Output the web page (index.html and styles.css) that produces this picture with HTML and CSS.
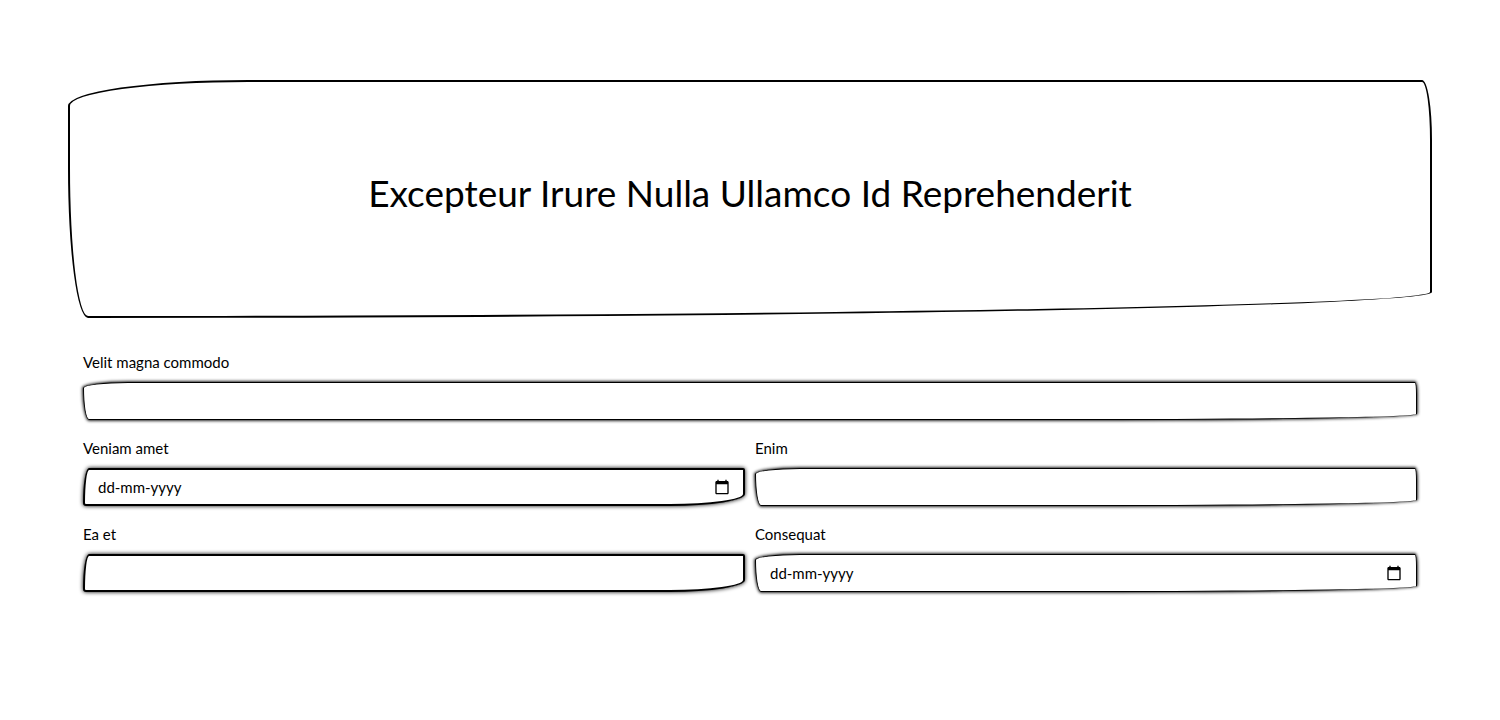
FILE: index.html
```html
<!DOCTYPE html>
<html lang="la">
<head>
<meta charset="utf-8">
<meta name="viewport" content="width=device-width, initial-scale=1">
<title>Excepteur Irure Nulla Ullamco Id Reprehenderit</title>
<link rel="stylesheet" href="styles.css">
</head>
<body>
<main class="page">
  <header class="banner">
    <h1 class="banner-title">Excepteur Irure Nulla Ullamco Id Reprehenderit</h1>
  </header>
  <form class="form">
    <div class="field field-wide">
      <label for="velit">Velit magna commodo</label>
      <input class="control" id="velit" type="text">
    </div>
    <div class="field">
      <label for="veniam">Veniam amet</label>
      <div class="control control-bold date">
        <input class="date-input" id="veniam" type="text" placeholder="dd-mm-yyyy">
        <button class="date-button" type="button" aria-label="Veniam amet">
          <svg viewBox="0 0 24 24" width="16" height="16"><path d="M20 3h-1V1h-2v2H7V1H5v2H4c-1.1 0-2 .9-2 2v16c0 1.100.9 2 2 2h16c1.100 0 2-.9 2-2V5c0-1.100-.9-2-2-2zm0 18H4V8h16v13z"/></svg>
        </button>
      </div>
    </div>
    <div class="field">
      <label for="enim">Enim</label>
      <input class="control" id="enim" type="text">
    </div>
    <div class="field">
      <label for="ea">Ea et</label>
      <input class="control control-bold" id="ea" type="text">
    </div>
    <div class="field">
      <label for="consequat">Consequat</label>
      <div class="control date">
        <input class="date-input" id="consequat" type="text" placeholder="dd-mm-yyyy">
        <button class="date-button" type="button" aria-label="Consequat">
          <svg viewBox="0 0 24 24" width="16" height="16"><path d="M20 3h-1V1h-2v2H7V1H5v2H4c-1.1 0-2 .9-2 2v16c0 1.100.9 2 2 2h16c1.100 0 2-.9 2-2V5c0-1.100-.9-2-2-2zm0 18H4V8h16v13z"/></svg>
        </button>
      </div>
    </div>
  </form>
</main>
</body>
</html>
```
FILE: styles.css
```css
* {
  box-sizing: border-box;
}

body {
  margin: 0;
  background: #fff;
  color: #000;
  font-family: Lato, "Open Sans", sans-serif;
  font-size: 15px;
  line-height: 24px;
}

.page {
  padding: 80px 68px;
}

.banner {
  padding: 86px 32px 98px;
  border: 2px solid #000;
  border-radius: 180px 10px 1340px 20px / 26px 60px 26px 150px;
  text-align: center;
}

.banner-title {
  margin: 0;
  font-size: 37px;
  font-weight: 400;
  line-height: 50px;
}

.form {
  display: grid;
  grid-template-columns: 1fr 1fr;
  gap: 16px 10px;
  padding: 32px 15px 0;
}

.field {
  display: flex;
  flex-direction: column;
  gap: 8px;
  min-width: 0;
}

.field-wide {
  grid-column: 1 / -1;
}

.control {
  width: 100%;
  height: 38px;
  padding: 0 14px;
  border: 1px solid #000;
  border-radius: 45px 2px 300px 6px / 6px 12px 6px 32px;
  background: #fff;
  box-shadow: 0 0 3px 1px rgba(0, 0, 0, 0.85);
  color: #000;
  font: inherit;
}

.control-bold {
  padding: 0 13px;
  border-width: 2px;
  border-radius: 6px 2px 75px 3px / 35px 2px 12px 3px;
  box-shadow: 0 0 4px #000;
}

.date {
  display: flex;
  align-items: center;
}

.date-input {
  flex: 1;
  min-width: 0;
  padding: 0;
  border: 0;
  outline: 0;
  background: none;
  color: #000;
  font: inherit;
}

.date-input::placeholder {
  color: #000;
  opacity: 1;
}

.date-button {
  display: flex;
  padding: 0;
  border: 0;
  background: none;
}
```
